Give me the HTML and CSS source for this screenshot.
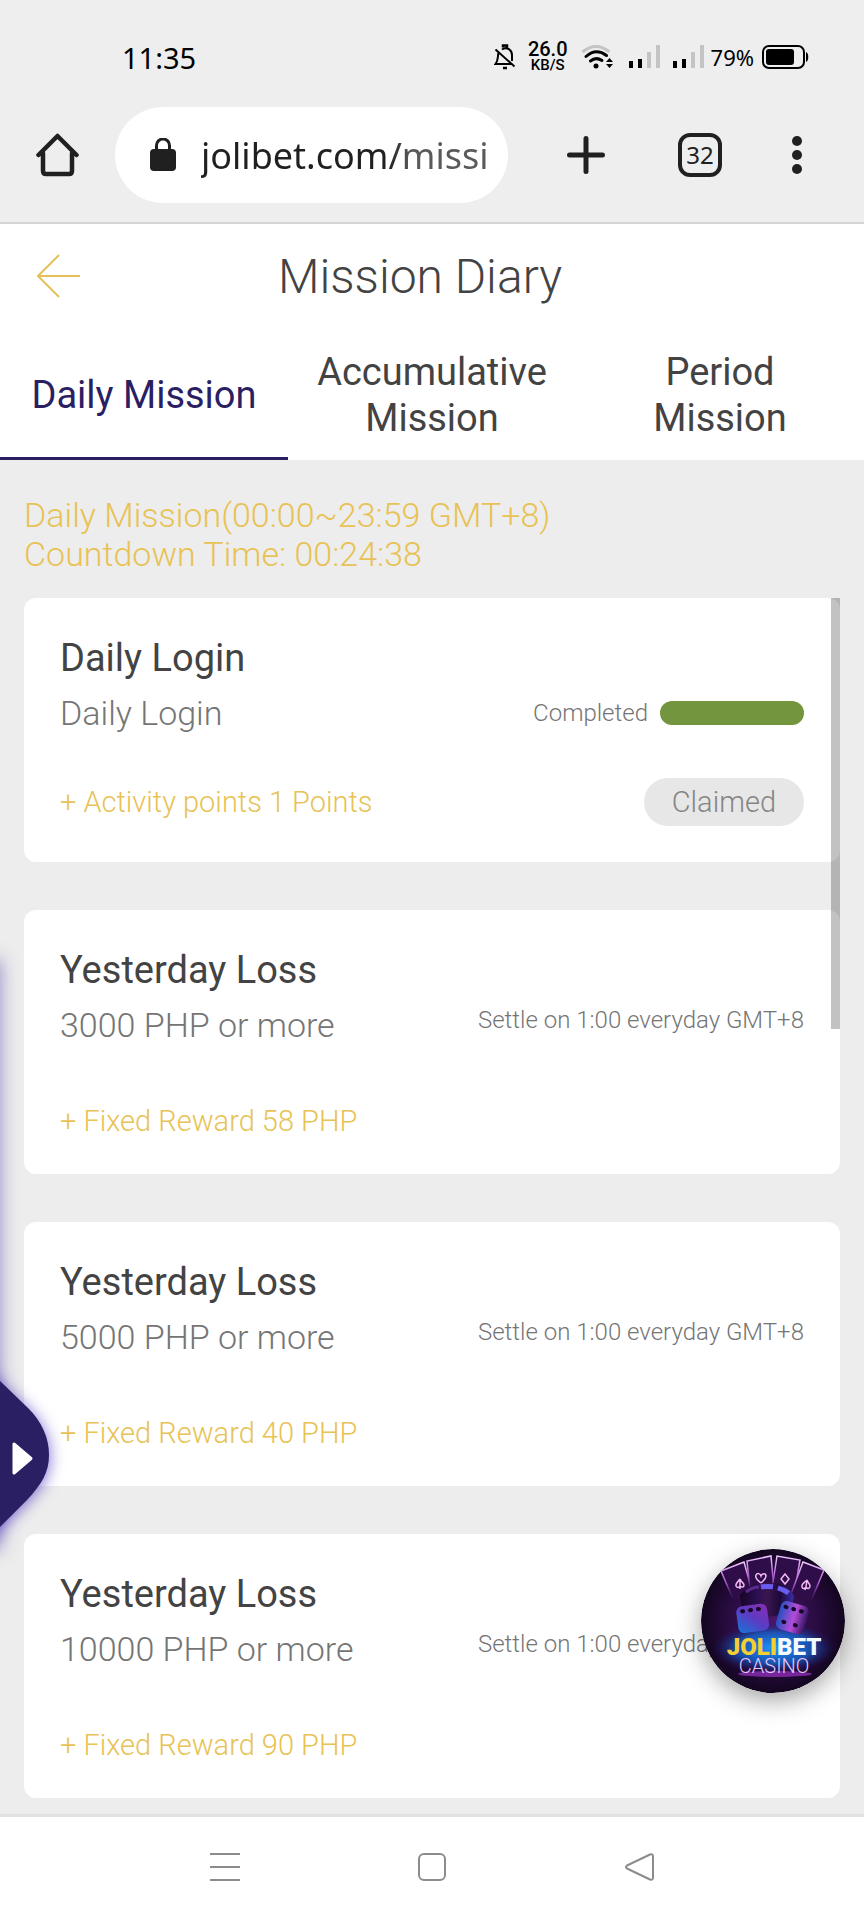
FILE: index.html
```html
<!DOCTYPE html>
<html lang="en">
<head>
  <meta charset="UTF-8">
  <meta name="viewport" content="width=device-width, initial-scale=1.0">
  <title>Mission Diary</title>
  <link rel="stylesheet" href="styles.css">
</head>
<body>
  <div class="status-bar">
    <time class="clock">11:35</time>
    <div class="status-icons">
      <svg width="22" height="28" viewBox="0 0 22 28" fill="none" stroke="#000" stroke-width="2">
        <path d="M8 6.500C13 3 18 7 18 12v6M4.500 9.500C3.500 14 4.500 17 1.500 21H17M1.500 6.500l19 17"/>
        <path d="M9 4.500V2.500h4v2M9 25h4" stroke-width="2.500"/>
      </svg>
      <div class="net-speed"><b>26.0</b><span>KB/S</span></div>
      <svg width="36" height="28" viewBox="0 0 36 28" fill="none" stroke-width="3">
        <path d="M2.500 9Q16-2 29.500 9" stroke="#c4c4c4"/>
        <path d="M6 13.500Q16 4.500 26.500 12.500M10.500 18Q16 13.500 22 17.500" stroke="#000" stroke-linecap="round"/>
        <circle cx="16" cy="23" r="2.500" fill="#000"/>
        <path d="M26 19l3.500-4 3.500 4zM26 21l3.500 4 3.500-4z" fill="#000"/>
      </svg>
      <svg width="32" height="28" viewBox="0 0 32 28">
        <path d="M1 18h4v7H1zM10 16h4v9h-4z"/>
        <path d="M19 9h4v16h-4zM28 2h4v23h-4z" fill="#c4c4c4"/>
      </svg>
      <div class="battery">
        <svg width="32" height="28" viewBox="0 0 32 28">
          <path d="M1 18h4v7H1zM10 16h4v9h-4z"/>
          <path d="M19 9h4v16h-4zM28 2h4v23h-4z" fill="#c4c4c4"/>
        </svg>
        <span>79%</span>
        <svg width="48" height="28" viewBox="0 0 48 28">
          <rect x="2" y="3" width="41" height="22" rx="6" fill="none" stroke="#000" stroke-width="2"/>
          <rect x="5" y="6" width="28" height="16" rx="3"/>
          <path d="M45 9c3 1 3 9 0 10z"/>
        </svg>
      </div>
    </div>
  </div>

  <div class="browser-bar">
    <button class="icon-btn" aria-label="Home">
      <svg width="44" height="44" viewBox="0 0 44 44" fill="none" stroke="#202020" stroke-width="4.500" stroke-linejoin="round" stroke-linecap="round">
        <path d="M3.500 22L22.500 3l19 19M8 20v18q0 3 3 3h23q3 0 3-3V20"/>
      </svg>
    </button>
    <div class="address">
      <svg width="26" height="34" viewBox="0 0 26 34">
        <rect y="11" width="26" height="22" rx="4" fill="#202020"/>
        <path d="M6.500 13V7.500a6.500 6.500 0 0 1 13 0V13" fill="none" stroke="#202020" stroke-width="3"/>
      </svg>
      <input type="text" value="jolibet.com/missi" aria-label="Address">
    </div>
    <div class="browser-actions">
      <button class="icon-btn" aria-label="New tab">
        <svg width="44" height="44" viewBox="0 0 44 44" stroke="#202020" stroke-width="5" stroke-linecap="round">
          <path d="M22 5.500v33M5.500 22h33"/>
        </svg>
      </button>
      <button class="tab-count" aria-label="Open tabs">32</button>
      <button class="icon-btn" aria-label="More">
        <svg width="10" height="44" viewBox="0 0 10 44" fill="#202020">
          <circle cx="5" cy="8" r="5"/><circle cx="5" cy="22" r="5"/><circle cx="5" cy="36" r="5"/>
        </svg>
      </button>
    </div>
  </div>

  <header class="page-header">
    <button class="icon-btn" aria-label="Back">
      <svg width="44" height="44" viewBox="0 0 44 44" fill="none" stroke="#e6bf58" stroke-width="2">
        <path d="M23 1L2 22l21 21M2 22h42"/>
      </svg>
    </button>
    <h1>Mission Diary</h1>
  </header>

  <nav class="tabs">
    <button class="tab active">Daily Mission</button>
    <button class="tab">Accumulative Mission</button>
    <button class="tab">Period Mission</button>
  </nav>

  <main>
    <p class="notice">Daily Mission(00:00~23:59 GMT+8)<br>Countdown Time: 00:24:38</p>

    <div class="mission-list">
      <section class="card">
        <h2>Daily Login</h2>
        <div class="row">
          <p class="desc">Daily Login</p>
          <div class="progress"><span>Completed</span><i class="bar"></i></div>
        </div>
        <div class="row reward-row">
          <p class="reward">+ Activity points 1 Points</p>
          <button class="claim" disabled>Claimed</button>
        </div>
      </section>

      <section class="card">
        <h2>Yesterday Loss</h2>
        <div class="row">
          <p class="desc">3000 PHP or more</p>
          <p class="settle">Settle on 1:00 everyday GMT+8</p>
        </div>
        <div class="row reward-row">
          <p class="reward">+ Fixed Reward 58 PHP</p>
        </div>
      </section>

      <section class="card">
        <h2>Yesterday Loss</h2>
        <div class="row">
          <p class="desc">5000 PHP or more</p>
          <p class="settle">Settle on 1:00 everyday GMT+8</p>
        </div>
        <div class="row reward-row">
          <p class="reward">+ Fixed Reward 40 PHP</p>
        </div>
      </section>

      <section class="card">
        <h2>Yesterday Loss</h2>
        <div class="row">
          <p class="desc">10000 PHP or more</p>
          <p class="settle">Settle on 1:00 everyday GMT+8</p>
        </div>
        <div class="row reward-row">
          <p class="reward">+ Fixed Reward 90 PHP</p>
        </div>
      </section>

      <div class="scroll-thumb"></div>
    </div>
  </main>

  <div class="bottom-nav">
    <button class="icon-btn" aria-label="Recent apps">
      <svg width="30" height="30" viewBox="0 0 30 30" stroke="#8c8c8c" stroke-width="2">
        <path d="M0 2h30M0 15h30M0 28h30"/>
      </svg>
    </button>
    <button class="icon-btn" aria-label="Home screen">
      <svg width="30" height="30" viewBox="0 0 30 30" fill="none" stroke="#8c8c8c" stroke-width="2">
        <rect x="2" y="2" width="26" height="26" rx="5"/>
      </svg>
    </button>
    <button class="icon-btn" aria-label="Go back">
      <svg width="30" height="30" viewBox="0 0 30 30" fill="none" stroke="#8c8c8c" stroke-width="2" stroke-linejoin="round">
        <path d="M25 2.500L2 13.500q-2 1.500 0 3l23 11q3 1 3-2v-21q0-3-3-2z"/>
      </svg>
    </button>
  </div>

  <!-- side drawer, closed -->
  <div class="drawer-edge"></div>
  <button class="drawer-handle" aria-label="Open menu">
    <svg width="50" height="150" viewBox="0 0 50 150">
      <path class="handle-shape" d="M-40 -38L0 1L28 28C42 42 49 58 49 75S42 104 27 120L0 147L-40 186z"/>
      <path d="M14 64v29l17-14.500z" fill="#fff" stroke="#fff" stroke-width="3" stroke-linejoin="round"/>
    </svg>
  </button>

  <!-- floating casino shortcut -->
  <a class="casino" href="#" aria-label="Jolibet Casino">
    <svg width="144" height="144" viewBox="0 0 144 144">
      <defs>
        <radialGradient id="bg"><stop offset="0" stop-color="#4b1668"/><stop offset=".6" stop-color="#2a0c42"/><stop offset="1" stop-color="#130620"/></radialGradient>
        <radialGradient id="glow"><stop offset="0" stop-color="#1c96ff"/><stop offset=".6" stop-color="#1561c8" stop-opacity=".8"/><stop offset="1" stop-color="#1c1a70" stop-opacity="0"/></radialGradient>
        <linearGradient id="die" x1="0" y1="1" x2="1" y2="0"><stop offset="0" stop-color="#1478d8"/><stop offset=".5" stop-color="#5b3cc4"/><stop offset="1" stop-color="#8a2cb0"/></linearGradient>
        <linearGradient id="die2"><stop offset="0" stop-color="#2450c0"/><stop offset=".55" stop-color="#b54bd8"/><stop offset="1" stop-color="#341662"/></linearGradient>
        <linearGradient id="chip"><stop offset="0" stop-color="#160525"/><stop offset=".3" stop-color="#2a0f50"/><stop offset=".5" stop-color="#3a1650"/><stop offset=".75" stop-color="#1c0838"/><stop offset="1" stop-color="#3c30a8"/></linearGradient>
        <linearGradient id="card" x2="0" y2="1"><stop offset="0" stop-color="#f0c8ff"/><stop offset=".6" stop-color="#a350c8"/><stop offset="1" stop-color="#6a2a98" stop-opacity="0"/></linearGradient>
        <clipPath id="round"><circle cx="72" cy="72" r="72"/></clipPath>
      </defs>
      <g clip-path="url(#round)">
        <circle cx="72" cy="72" r="72" fill="url(#bg)"/>
        <g fill="#2e0d48" stroke="url(#card)" stroke-width="1.500">
          <path d="M32 50L20 22l23-9 10 36"/>
          <path d="M49 40L46 12l24-5 3 34"/>
          <path d="M71 40l5-33 23 4-6 35"/>
          <path d="M90 45l12-32 21 8-13 31"/>
        </g>
        <g fill="none" stroke="#f2b8f4" stroke-width="1.500">
          <path d="M39 30c-2 3-5 5-4 7s3 2 4 0v3m0-3c2 2 4 1 4-1s-3-3-4-6z"/>
          <path d="M60 34c-4-3-6-6-5-8s4-2 5 1c1-3 5-3 5 0s-2 4-5 7z"/>
          <path d="M84 25l4 5-4 5-4-5z"/>
          <path d="M106 31c-3 3-6 4-5 7s3 1 4 0l-1 3m1-3c2 3 4 1 4-1s-2-3-3-6z"/>
        </g>
        <path d="M39 46c12-16 44-17 54 1l-3 13c-12 10-38 10-49 0z" fill="url(#chip)"/>
        <path d="M60 38c11-2 22 1 30 8" fill="none" stroke="#6a5cf0" stroke-width="5" stroke-dasharray="12 5"/>
        <path d="M45 43c5-4 9-5 13-5" fill="none" stroke="#5a2a8c" stroke-width="3"/>
        <ellipse cx="73" cy="99" rx="62" ry="26" fill="url(#glow)"/>
        <g transform="rotate(-8 51 68)"><rect x="36" y="56" width="31" height="27" rx="6" fill="url(#die)"/><path d="M42 61h19" stroke="#16062b" stroke-width="4" stroke-linecap="round" stroke-dasharray="1 7"/></g>
        <g transform="rotate(16 91 68)"><rect x="77" y="54" width="29" height="29" rx="6" fill="url(#die2)"/><path d="M82 60h18M84 75h1M96 75h1" stroke="#16062b" stroke-width="4" stroke-linecap="round" stroke-dasharray="1 7"/></g>
        <ellipse cx="74" cy="125" rx="37" ry="3" fill="#b33be0" opacity=".6"/>
        <text class="logo-bold" x="73" y="106" text-anchor="middle"><tspan fill="#f4cf32">JOLI</tspan><tspan fill="#f4fbff">BET</tspan></text>
        <text class="logo-thin" x="73" y="124" text-anchor="middle">CASINO</text>
      </g>
    </svg>
  </a>
</body>
</html>
```
FILE: styles.css
```css
:root {
  --gray-bg: #ededed;
  --text: #434343;
  --text-light: #757575;
  --gold: #e8c254;
  --navy: #2b1f63;
}

* {
  box-sizing: border-box;
}

body {
  margin: 0;
  min-height: 100vh;
  display: flex;
  flex-direction: column;
  position: relative;
  overflow-x: hidden;
  background: var(--gray-bg);
  color: var(--text);
  font-family: Roboto, "Liberation Sans", sans-serif;
}

h1, h2, p {
  margin: 0;
}

svg {
  display: block;
}

button {
  padding: 0;
  border: none;
  background: none;
  color: inherit;
  font-family: inherit;
  cursor: pointer;
}

.icon-btn {
  flex: none;
}

/* phone status bar */
.status-bar {
  display: flex;
  justify-content: space-between;
  align-items: center;
  height: 88px;
  padding: 26px 55px 0 122px;
  background: #eee;
  color: #000;
  font-family: "Noto Sans", sans-serif;
}

.clock {
  font-size: 29px;
}

.status-icons {
  display: flex;
  align-items: center;
  gap: 12px;
}

.net-speed {
  display: flex;
  flex-direction: column;
  align-items: center;
  font-family: Roboto, sans-serif;
  font-size: 15px;
  line-height: 15px;
  font-weight: 500;
}

.net-speed b {
  font-size: 20px;
  line-height: 17px;
  font-weight: 500;
}

.battery {
  display: flex;
  align-items: center;
  gap: 7px;
  font-size: 22px;
}

/* browser bar */
.browser-bar {
  display: flex;
  align-items: center;
  height: 136px;
  padding: 0 62px 0 35px;
  gap: 36px;
  background: #eee;
  border-bottom: 2px solid #d4d4d4;
}

.address {
  flex: 1;
  min-width: 0;
  display: flex;
  align-items: center;
  gap: 25px;
  height: 96px;
  padding: 0 16px 0 35px;
  background: #fff;
  border-radius: 48px;
}

.address svg {
  flex: none;
}

.address input {
  flex: 1;
  min-width: 0;
  padding: 0;
  border: none;
  outline: none;
  background: linear-gradient(90deg, #202020 64%, #5a5a5a 72%);
  -webkit-background-clip: text;
  background-clip: text;
  color: transparent;
  font-family: "Noto Sans", sans-serif;
  font-size: 36px;
}

.browser-actions {
  display: flex;
  align-items: center;
  gap: 70px;
  margin-left: 20px;
}

.tab-count {
  width: 44px;
  height: 44px;
  border: 4px solid #202020;
  border-radius: 12px;
  color: #202020;
  font-family: "Noto Sans", sans-serif;
  font-size: 24px;
  line-height: 36px;
}

/* page header */
.page-header {
  display: flex;
  align-items: center;
  height: 106px;
  padding: 0 104px 2px 36px;
  background: #fff;
}

.page-header h1 {
  flex: 1;
  text-align: center;
  font-size: 48px;
  font-weight: 300;
}

.tabs {
  display: flex;
  height: 130px;
  background: #fff;
}

.tab {
  flex: 1;
  padding: 0 24px;
  font-size: 38px;
  line-height: 46px;
}

.tab.active {
  color: var(--navy);
  box-shadow: inset 0 -3px var(--navy);
}

/* missions */
main {
  flex: 1;
  padding: 36px 24px 16px;
}

.notice {
  margin-bottom: 24px;
  color: var(--gold);
  font-size: 34px;
  line-height: 39px;
  font-weight: 300;
}

.mission-list {
  position: relative;
  display: flex;
  flex-direction: column;
  gap: 48px;
}

.card {
  display: flex;
  flex-direction: column;
  min-height: 264px;
  padding: 36px;
  background: #fff;
  border-radius: 12px;
}

.card h2 {
  margin-bottom: 12px;
  font-size: 38px;
  line-height: 48px;
  font-weight: 400;
}

.row {
  display: flex;
  justify-content: space-between;
  align-items: center;
}

.reward-row {
  margin-top: auto;
}

.desc {
  color: var(--text-light);
  font-size: 34px;
  line-height: 38px;
  font-weight: 300;
}

.progress,
.settle {
  color: var(--text-light);
  font-size: 24px;
  line-height: 28px;
  font-weight: 300;
}

.progress {
  display: flex;
  align-items: center;
  gap: 12px;
}

.settle {
  align-self: flex-start;
}

.bar {
  width: 144px;
  height: 24px;
  border-radius: 12px;
  background: #73953d;
}

.reward {
  color: var(--gold);
  font-size: 29px;
  line-height: 34px;
  font-weight: 300;
}

.claim {
  height: 48px;
  padding: 0 28px;
  border-radius: 24px;
  background: #e7e7e7;
  color: #858585;
  font-size: 29px;
  font-weight: 300;
}

.scroll-thumb {
  position: absolute;
  top: 0;
  right: 0;
  width: 9px;
  height: 431px;
  background: rgba(0, 0, 0, .24);
}

/* phone navigation */
.bottom-nav {
  display: flex;
  justify-content: space-evenly;
  align-items: center;
  height: 106px;
  padding: 0 32px 4px;
  background: #fff;
  border-top: 3px solid #e2e2e2;
}

/* floating items */
.drawer-edge {
  position: absolute;
  left: -20px;
  bottom: 370px;
  width: 20px;
  height: 590px;
  box-shadow: 0 0 18px rgba(60, 40, 160, .5);
}

.drawer-handle {
  position: absolute;
  left: 0;
  bottom: 390px;
}

.drawer-handle svg {
  overflow: visible;
}

.handle-shape {
  fill: var(--navy);
  filter: drop-shadow(0 2px 8px rgba(70, 40, 190, .7));
}

.casino {
  position: absolute;
  right: 19px;
  bottom: 227px;
  border-radius: 50%;
  box-shadow: 0 8px 24px rgba(0, 0, 0, .35);
}

.logo-bold {
  font-size: 24px;
  font-weight: 900;
}

.logo-thin {
  fill: #e6c8ff;
  font-size: 20px;
  font-weight: 300;
}
```
